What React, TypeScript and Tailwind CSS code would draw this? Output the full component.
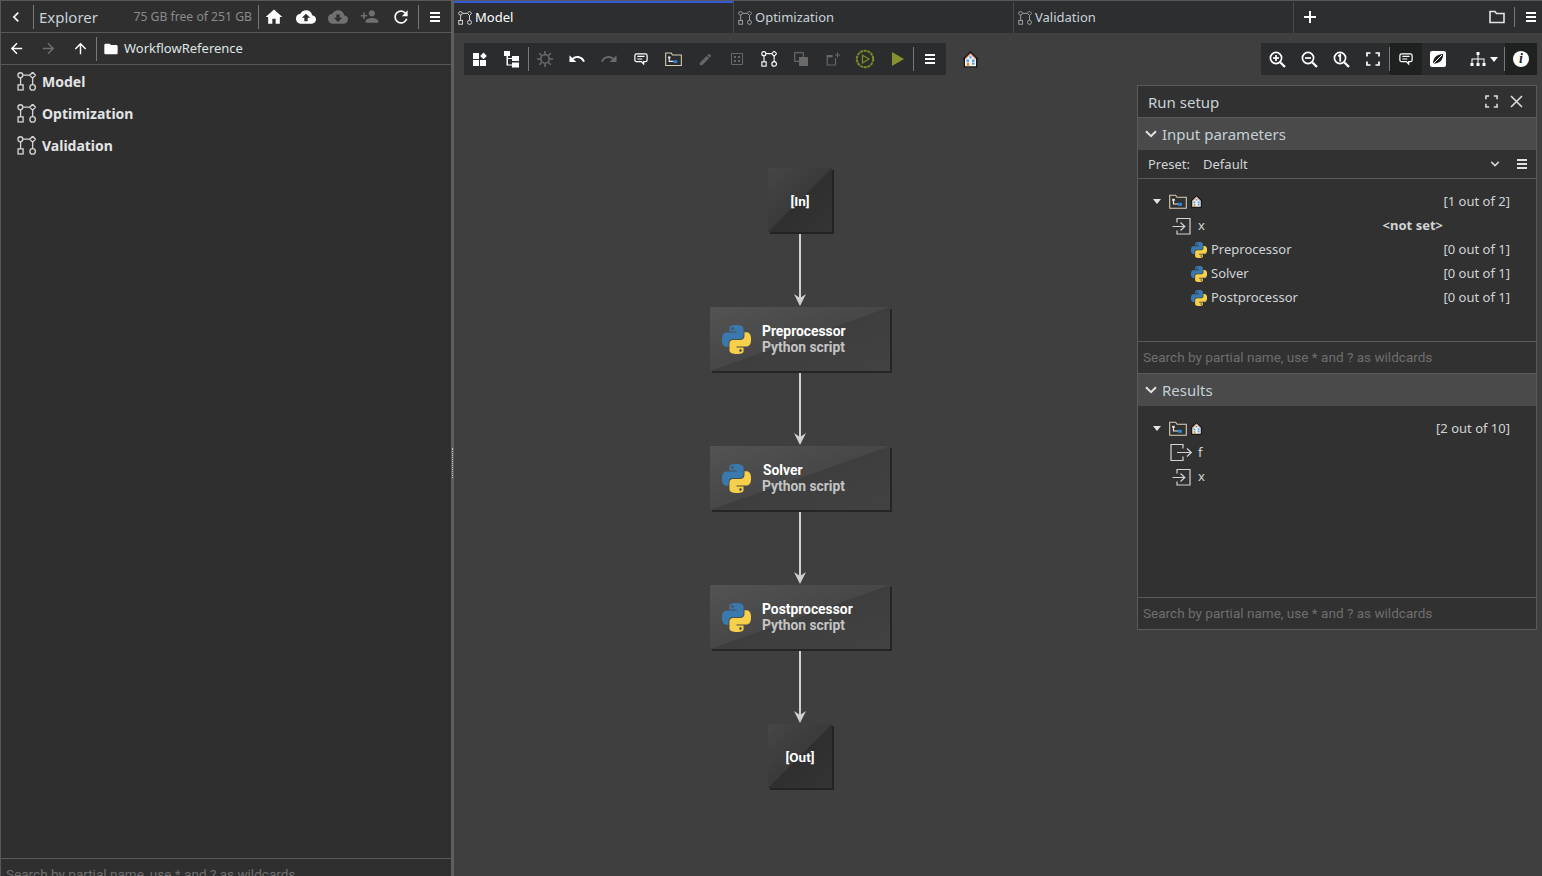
import React from "react";
import { MdArrowBack, MdArrowForward, MdArrowUpward, MdChevronLeft, MdCloudDownload, MdCloudUpload, MdEdit, MdFolder, MdHome, MdPersonAdd, MdRedo, MdRefresh, MdUndo } from "react-icons/md";

const ui = "font-['Noto_Sans','Open_Sans',sans-serif]";
const rb = "font-['Roboto','Liberation_Sans',sans-serif]";

function Menu({ className = "" }: { className?: string }) {
  return (
    <svg width="14" height="14" viewBox="0 0 14 14" className={className} fill="currentColor">
      <rect x="2" y="2" width="10" height="2" />
      <rect x="2" y="6" width="10" height="2" />
      <rect x="2" y="10" width="10" height="2" />
    </svg>
  );
}

function Chev({ className = "" }: { className?: string }) {
  return (
    <svg width="12" height="8" viewBox="0 0 12 8" fill="none" stroke="currentColor" strokeWidth="2" className={className}>
      <path d="M1 1.2 6 6.2 11 1.2" />
    </svg>
  );
}

function Wf({ size = 18, className = "" }: { size?: number; className?: string }) {
  return (
    <svg width={size} height={size} viewBox="0 0 18 18" fill="none" stroke="currentColor" strokeWidth="1.25" className={className}>
      <circle cx="3.2" cy="3" r="2.3" />
      <path d="M14.8 .2 17.6 3 14.8 5.8 12 3Z" />
      <rect x="1" y="12.2" width="4.8" height="4.8" />
      <circle cx="14.8" cy="14.6" r="2.6" />
      <path d="M5.5 3H12M3.4 5.3V12.2M14.8 5.8V12" />
    </svg>
  );
}

const PY1 = "M14.25.18l.9.2.73.26.59.3.45.32.34.34.25.34.16.33.1.3.04.26.02.2-.01.13V8.5l-.05.63-.13.55-.21.46-.26.38-.3.31-.33.25-.35.19-.35.14-.33.1-.3.07-.26.04-.21.02H8.77l-.69.05-.59.14-.5.22-.41.27-.33.32-.27.35-.2.36-.15.37-.1.35-.07.32-.04.27-.02.21v3.06H3.17l-.21-.03-.28-.07-.32-.12-.35-.18-.36-.26-.36-.36-.35-.46-.32-.59-.28-.73-.21-.88-.14-1.05-.05-1.23.06-1.22.16-1.04.24-.87.32-.71.36-.57.4-.44.42-.33.42-.24.4-.16.36-.1.32-.05.24-.01h.16l.06.01h8.16v-.83H6.18l-.01-2.75-.02-.37.05-.34.11-.31.17-.28.25-.26.31-.23.38-.2.44-.18.51-.15.58-.12.64-.1.71-.06.77-.04.84-.02 1.27.05zm-6.3 1.98l-.23.33-.08.41.08.41.23.34.33.22.41.09.41-.09.33-.22.23-.34.08-.41-.08-.41-.23-.33-.33-.22-.41-.09-.41.09z";
const PY2 = "M21.04 6.11l.28.06.32.12.35.18.36.27.36.35.35.47.32.59.28.73.21.88.14 1.04.05 1.23-.06 1.23-.16 1.04-.24.86-.32.71-.36.57-.4.45-.42.33-.42.24-.4.16-.36.09-.32.05-.24.02-.16-.01h-8.22v.82h5.84l.01 2.76.02.36-.05.34-.11.31-.17.29-.25.25-.31.24-.38.2-.44.17-.51.15-.58.13-.64.09-.71.07-.77.04-.84.01-1.27-.04-1.07-.14-.9-.2-.73-.25-.59-.3-.45-.33-.34-.34-.25-.34-.16-.33-.1-.3-.04-.25-.02-.2.01-.13v-5.34l.05-.64.13-.54.21-.46.26-.38.3-.32.33-.24.35-.2.35-.14.33-.1.3-.06.26-.04.21-.02.13-.01h5.84l.69-.05.59-.14.5-.21.41-.28.33-.32.27-.35.2-.36.15-.36.1-.35.07-.32.04-.28.02-.21V6.07h2.09l.14.01zm-6.47 14.25l-.23.33-.08.41.08.41.23.33.33.23.41.08.41-.08.33-.23.23-.33.08-.41-.08-.41-.23-.33-.33-.23-.41-.08-.41.08z";

function Py({ size = 16, className = "" }: { size?: number; className?: string }) {
  return (
    <svg width={size} height={size} viewBox="0 0 24 24" className={className}>
      <path d={PY1} fill="#3a79ad" />
      <path d={PY2} fill="#f6cf4b" />
    </svg>
  );
}

function House({ size = 16 }: { size?: number }) {
  return (
    <svg width={size} height={size} viewBox="0 0 16 16">
      <path d="M8 0 15.4 7.4 14.4 8.4V15.6H1.6V8.4L.6 7.4Z" fill="#0e1412" />
      <path d="M8 1.8 13.2 7V14.4H2.8V7Z" fill="#f2f2f2" />
      <path d="M8 1.8 13.6 7.4 12.9 8.1 8 3.2 3.1 8.1 2.4 7.4Z" fill="#c9785a" />
      <rect x="4.2" y="8" width="2.4" height="2.2" fill="#4c9ad8" />
      <rect x="9.4" y="8" width="2.4" height="2.2" fill="#4c9ad8" />
      <rect x="7" y="5" width="2" height="2" fill="#4c9ad8" />
      <rect x="4.6" y="11" width="2" height="3.4" fill="#dd8a2a" />
      <rect x="9.4" y="11" width="2.4" height="1.8" fill="#4c9ad8" />
    </svg>
  );
}

function FolderWf({ size = 18 }: { size?: number }) {
  return (
    <svg width={size} height={size} viewBox="0 0 18 18" fill="none">
      <path d="M.7 15.3V2.2H6.6L8 4.2H17.3V15.3Z" stroke="#d9cdb4" strokeWidth="1.1" />
      <path d="M4.5 6.5V11H9" stroke="#e8e8e8" strokeWidth="1.2" />
      <rect x="3.2" y="5.8" width="2.6" height="2" fill="#e8e8e8" />
      <rect x="9" y="9.8" width="4" height="3" fill="#2f83cf" />
    </svg>
  );
}

function InputIco() {
  return (
    <svg width="20" height="20" viewBox="0 0 20 20" fill="none" stroke="#d4d4d4" strokeWidth="1.2">
      <path d="M5 6.5V2.5H18V18H5V14.5" />
      <path d="M.5 10.5H12.5M8.5 6.5 12.8 10.5 8.5 14.5" />
    </svg>
  );
}
function OutputIco() {
  return (
    <svg width="24" height="20" viewBox="0 0 24 20" fill="none" stroke="#d4d4d4" strokeWidth="1.2">
      <path d="M13 5.5V1.5H1V17.5H13V13.5" />
      <path d="M7 9.5H21M17 5.5 21.3 9.5 17 13.5" />
    </svg>
  );
}

function Comment({ color = "#fff" }: { color?: string }) {
  return (
    <svg width="14" height="14" viewBox="0 0 16 16" fill="none" stroke={color} strokeWidth="1.4">
      <path d="M3 2.2H13Q15 2.2 15 4.2V9Q15 11 13 11H11V13.6L8.4 11H3Q1 11 1 9V4.2Q1 2.2 3 2.2Z" />
      <path d="M3.8 5H12M3.8 8H9.5" />
    </svg>
  );
}

function Grid() {
  return (
    <svg width="16" height="16" viewBox="0 0 16 16" fill="#fff">
      <rect x="1" y="2" width="6" height="6" />
      <rect x="1" y="9" width="6" height="6" />
      <rect x="8" y="9" width="6" height="6" />
      <path d="M11.5 1.5 14.8 5 11.5 8.3 8.2 5Z" />
    </svg>
  );
}
function Tree() {
  return (
    <svg width="18" height="18" viewBox="0 0 18 18" fill="#fff">
      <rect x="1" y="1" width="6" height="5" />
      <rect x="9" y="6" width="7" height="5" />
      <rect x="9" y="12.5" width="7" height="5" />
      <path d="M3.5 6H5V8H9V9H5V14.5H9V15.5H3.5Z" />
    </svg>
  );
}
function Sun() {
  return (
    <svg width="16" height="16" viewBox="0 0 16 16" fill="none" stroke="#6a6a6a" strokeWidth="1.6">
      <circle cx="8" cy="8" r="4.2" />
      <path d="M8 0V3M8 13V16M0 8H3M13 8H16M2.3 2.3 4.4 4.4M11.6 11.6 13.7 13.7M2.3 13.7 4.4 11.6M11.6 4.4 13.7 2.3" />
    </svg>
  );
}
function Dots() {
  return (
    <svg width="14" height="14" viewBox="0 0 14 14" fill="#686868">
      <path d="M1.5 1.5H12.5V12.5H1.5Z" fill="none" stroke="#686868" />
      <rect x="4" y="4" width="2" height="2" />
      <rect x="8" y="4" width="2" height="2" />
      <rect x="4" y="8" width="2" height="2" />
      <rect x="8" y="8" width="2" height="2" />
    </svg>
  );
}
function Overlap() {
  return (
    <svg width="14" height="14" viewBox="0 0 14 14">
      <rect x=".7" y=".7" width="8.6" height="8.6" fill="none" stroke="#6a6a6a" strokeWidth="1.2" />
      <rect x="5" y="5" width="9" height="9" fill="#6a6a6a" />
    </svg>
  );
}
function AddFrame() {
  return (
    <svg width="14" height="14" viewBox="0 0 14 14" fill="none" stroke="#666" strokeWidth="1.2">
      <path d="M1.2 4.5V13H9.5V6" />
      <rect x=".6" y="3" width="6" height="2.4" fill="#666" stroke="none" />
      <path d="M11.5 .5V5.5M9 3H14" />
    </svg>
  );
}
function PlayBadge() {
  return (
    <svg width="20" height="20" viewBox="0 0 20 20" fill="none">
      <circle cx="10" cy="10" r="8.2" stroke="#7b8a26" strokeWidth="2" strokeDasharray="3 .7" />
      <path d="M7.5 6.2 14 10 7.5 13.8Z" stroke="#7b8a26" strokeWidth="1.3" />
    </svg>
  );
}
function Play() {
  return (
    <svg width="14" height="16" viewBox="0 0 14 16" className="ml-[2px]"><path d="M1 1 13 8 1 15Z" fill="#86922f" /></svg>
  );
}
function Zoom({ mode }: { mode: "in" | "out" | "one" }) {
  return (
    <svg width="17" height="17" viewBox="0 0 17 17" fill="none" stroke="#fff" strokeWidth="1.7">
      <circle cx="7" cy="7" r="5.6" />
      <path d="M11.2 11.2 16 16" strokeWidth="2.2" />
      {mode !== "one" && <path d="M4 7H10" />}
      {mode === "in" && <path d="M7 4V10" />}
      {mode === "one" && <path d="M5.2 5.2 7.2 3.8V10.4" strokeWidth="1.8" />}
    </svg>
  );
}
function Fit({ size = 14, className = "" }: { size?: number; className?: string }) {
  return (
    <svg width={size} height={size} viewBox="0 0 14 14" fill="none" stroke="currentColor" strokeWidth="1.7" className={className}>
      <path d="M1 4.5V1H4.5M9.5 1H13V4.5M13 9.5V13H9.5M4.5 13H1V9.5" />
    </svg>
  );
}
function Note() {
  return (
    <svg width="16" height="16" viewBox="0 0 16 16">
      <rect x="0" y="0" width="16" height="16" rx="2" fill="#fff" />
      <path d="M3 12.8C3 6.5 7 3.2 13.2 3 13.2 9 9.5 12.8 3 12.8Z" fill="#1c1c1c" />
      <path d="M2 14 12 4" stroke="#fff" strokeWidth="1" />
    </svg>
  );
}
function Hier() {
  return (
    <svg width="16" height="16" viewBox="0 0 16 16" fill="#fff">
      <rect x="6.5" y="1" width="3" height="3" />
      <rect x="0.5" y="12" width="3" height="3" />
      <rect x="6.5" y="12" width="3" height="3" />
      <rect x="12.5" y="12" width="3" height="3" />
      <path d="M7.5 4H8.5V7.5H14.5V12H13.5V8.5H8.5V12H7.5V8.5H2.5V12H1.5V7.5H7.5Z" />
    </svg>
  );
}

function Cell({ children, className = "" }: { children: React.ReactNode; className?: string }) {
  return <div className={`flex h-8 w-8 shrink-0 items-center justify-center ${className}`}>{children}</div>;
}
function VDiv({ h = "h-6" }: { h?: string }) {
  return <div className={`w-px shrink-0 bg-[#77797a] ${h}`} />;
}

function Tab({ label, active }: { label: string; active?: boolean }) {
  return (
    <div className={`flex h-full w-[280px] shrink-0 items-center gap-[3px] border-t-2 border-r border-r-[#4a4a4a] pl-[4px] text-[13px] ${ui} ${active ? "border-t-[#3358d8] text-white" : "border-t-transparent text-[#c8d2d8]"}`}>
      <Wf size={14} className={active ? "text-[#d8d8d8]" : "text-[#a0a0a0]"} />
      <span>{label}</span>
    </div>
  );
}

function Node({ top, name, solver }: { top: number; name: string; solver?: boolean }) {
  return (
    <div
      className={`absolute left-[256px] flex h-[64px] w-[180px] items-center bg-[linear-gradient(to_bottom_right,#535353_0%,#474747_49.9%,#3e3e3e_50.1%,#424242_100%)] pl-[12px] shadow-[2px_2px_0_#252525] ${rb}`}
      style={{ top }}
    >
      <Py size={29} />
      <div className="ml-[11px] flex flex-col text-[13.85px] leading-[16px] font-bold">
        <span className={`text-white ${solver ? "ml-px" : ""}`}>{name}</span>
        <span className="text-[#c4c4c4]">Python script</span>
      </div>
    </div>
  );
}

function Port({ top, label }: { top: number; label: string }) {
  return (
    <div
      className={`absolute left-[314px] flex h-[64px] w-[64px] items-center justify-center bg-[linear-gradient(to_bottom_right,#464646_0%,#3a3a3a_49.9%,#2f2f2f_50.1%,#343434_100%)] pt-[2px] text-[13.5px] font-bold text-white shadow-[2px_2px_0_#232323] ${rb}`}
      style={{ top }}
    >
      {label}
    </div>
  );
}

function TreeRow({ children }: { children: React.ReactNode }) {
  return <div className="flex h-6 items-center pt-px text-[13px] text-[#d0d4d6]">{children}</div>;
}

function Tri() {
  return <span className="mr-[8px] h-0 w-0 border-x-[4.5px] border-t-[5px] border-x-transparent border-t-[#e4e4e4]" />;
}

function SectionHead({ label }: { label: string }) {
  return (
    <div className="flex h-8 shrink-0 items-center bg-[#4a4a4a] pl-[7px] text-[15px] text-[#c4d0d6]">
      <Chev className="text-[#e0e0e0]" />
      <span className="ml-[5px]">{label}</span>
    </div>
  );
}

function Search({ className = "" }: { className?: string }) {
  return (
    <div className={`flex h-8 shrink-0 items-center border-t border-[#5a5a5a] pl-[5px] text-[13.55px] text-[#6e6e6e] ${rb} ${className}`}>
      Search by partial name, use * and ? as wildcards
    </div>
  );
}

export default function App() {
  return (
    <div className={`flex h-[876px] w-[1542px] overflow-hidden bg-[#3f3f3f] ${ui}`}>
      {/* Explorer */}
      <div className="flex h-[890px] w-[451px] shrink-0 flex-col border-t border-l border-[#585858] bg-[#2f2f2f]">
        <div className="flex h-[32px] shrink-0 items-center border-b border-[#585858]">
          <Cell className="-ml-px"><MdChevronLeft size={20} className="text-white" /></Cell>
          <div className="ml-px"><VDiv /></div>
          <span className="ml-[5px] pt-[2px] text-[15px] text-[#c8d2d8]">Explorer</span>
          <span className="ml-auto mr-[6px] pt-[2px] text-[12.2px] text-[#8a8a8a]">75 GB free of 251 GB</span>
          <VDiv />
          <Cell className="-ml-px"><MdHome size={20} className="text-white" /></Cell>
          <Cell><MdCloudUpload size={20} className="text-white" /></Cell>
          <Cell><MdCloudDownload size={20} className="text-[#707070]" /></Cell>
          <Cell className="-ml-px"><MdPersonAdd size={19} className="text-[#707070]" /></Cell>
          <Cell><MdRefresh size={20} className="text-white" /></Cell>
          <div className="ml-px"><VDiv /></div>
          <Cell className="text-white"><Menu /></Cell>
        </div>
        <div className="flex h-[32px] shrink-0 items-center border-b border-[#585858]">
          <Cell className="-ml-px"><MdArrowBack size={17} className="text-white" /></Cell>
          <Cell><MdArrowForward size={17} className="text-[#6e6e6e]" /></Cell>
          <Cell><MdArrowUpward size={17} className="text-white" /></Cell>
          <VDiv />
          <MdFolder size={16} className="ml-[6px] text-white" />
          <span className="ml-[5px] text-[13px] text-[#dfe4e6]">WorkflowReference</span>
        </div>
        <div className="flex flex-1 flex-col">
          {["Model", "Optimization", "Validation"].map((n) => (
            <div key={n} className="flex h-8 items-center pl-[16px] text-[14px] font-bold text-[#e2e4e6]">
              <Wf size={19} className="text-[#d4d4d4]" />
              <span className="ml-[6px]">{n}</span>
            </div>
          ))}
        </div>
        <Search />
      </div>

      {/* Splitter */}
      <div className="flex h-full w-[3px] shrink-0 items-center justify-center bg-[#5e5e5e] pt-[50px]">
        <div className="h-[30px] w-px border-l border-dotted border-[#c0c0c0]" />
      </div>

      {/* Main */}
      <div className="relative min-w-0 flex-1">
        <div className="flex h-[33px] items-stretch border-t border-[#585858] bg-[#2d2e30]">
          <Tab label="Model" active />
          <Tab label="Optimization" />
          <Tab label="Validation" />
          <div className="flex w-[32px] items-center justify-center">
            <svg width="12" height="12" viewBox="0 0 12 12" fill="none" stroke="#fff" strokeWidth="2"><path d="M6 0V12M0 6H12" /></svg>
          </div>
          <div className="ml-auto flex items-center">
            <svg width="16" height="14" viewBox="0 0 16 14" fill="none" stroke="#e4e4e4" strokeWidth="1.6" className="mr-[9px]">
              <path d="M1 12.5V1.5H6L7.5 3.5H15V12.5Z" />
            </svg>
            <VDiv h="h-5" />
            <div className="flex h-8 w-[27px] items-center justify-center pl-[5px] text-white"><Menu /></div>
          </div>
        </div>

        {/* Canvas */}
        <svg className="absolute left-0 top-0" width="1088" height="876" fill="none">
          {[[232, 306], [371, 445], [510, 584], [649, 723]].map(([a, b]) => (
            <g key={a}>
              <path d={`M346 ${a}V${b - 6}`} stroke="#d0d0d0" strokeWidth="2" />
              <path d={`M346 ${b} L340 ${b - 12} L346 ${b - 8} L352 ${b - 12}Z`} fill="#d0d0d0" />
            </g>
          ))}
        </svg>
        <Port top={168} label="[In]" />
        <Node top={307} name="Preprocessor" />
        <Node top={446} name="Solver" solver />
        <Node top={585} name="Postprocessor" />
        <Port top={724} label="[Out]" />

        {/* Left toolbar */}
        <div className="absolute left-[10px] top-[43px] flex h-8 items-center bg-[#2b2c2e]">
          <Cell><Grid /></Cell>
          <Cell><Tree /></Cell>
          <VDiv />
          <Cell><Sun /></Cell>
          <Cell><MdUndo size={18} className="text-white" /></Cell>
          <Cell><MdRedo size={18} className="text-[#6a6a6a]" /></Cell>
          <Cell><Comment /></Cell>
          <Cell><FolderWf size={17} /></Cell>
          <Cell><MdEdit size={15} className="text-[#666]" /></Cell>
          <Cell><Dots /></Cell>
          <Cell className="text-white"><Wf size={16} /></Cell>
          <Cell><Overlap /></Cell>
          <Cell><AddFrame /></Cell>
          <Cell><PlayBadge /></Cell>
          <Cell><Play /></Cell>
          <VDiv />
          <Cell className="text-white"><Menu /></Cell>
        </div>
        <div className="absolute left-[500px] top-[43px] flex h-8 w-8 items-center justify-center"><House size={17} /></div>

        {/* Right toolbar */}
        <div className="absolute left-[807px] top-[43px] flex h-8 items-center bg-[#2b2c2e]">
          <Cell><Zoom mode="in" /></Cell>
          <Cell><Zoom mode="out" /></Cell>
          <Cell><Zoom mode="one" /></Cell>
          <Cell className="text-white"><Fit /></Cell>
          <VDiv />
          <Cell className="bg-[#1f2121]"><Comment /></Cell>
          <Cell><Note /></Cell>
          <div className="flex h-8 w-[50px] items-center pl-[16px]">
            <Hier />
            <span className="ml-[4px] h-0 w-0 border-x-[4px] border-t-[5px] border-x-transparent border-t-white" />
          </div>
          <VDiv />
          <Cell className="bg-[#1f2121]">
            <span className="flex h-4 w-4 items-center justify-center rounded-full bg-white font-['Liberation_Serif',serif] text-[14px] leading-none font-bold text-[#1f2121] italic">i</span>
          </Cell>
        </div>

        {/* Run setup */}
        <div className="absolute left-[683px] top-[85px] flex h-[545px] w-[400px] flex-col border border-[#5a5a5a] bg-[#313131]">
          <div className="flex h-8 shrink-0 items-center border-b border-[#5a5a5a] pl-[10px] pr-[13px] text-[15px] text-[#c8d2d8]">
            <span className="pt-px">Run setup</span>
            <Fit size={13} className="ml-auto text-[#dcdcdc]" />
            <svg width="13" height="13" viewBox="0 0 13 13" fill="none" stroke="#dcdcdc" strokeWidth="1.6" className="ml-[12px]"><path d="M1 1 12 12M12 1 1 12" /></svg>
          </div>
          <SectionHead label="Input parameters" />
          <div className="flex h-[29px] shrink-0 items-center border-b border-[#5a5a5a] pl-[10px] text-[13px] text-[#d0d4d6]">
            <span className="pt-px">Preset:</span>
            <span className="ml-[13px] pt-px">Default</span>
            <Chev className="ml-auto scale-75 text-[#d4d4d4]" />
            <Menu className="ml-[14px] mr-[7px] text-[#e0e0e0]" />
          </div>
          <div className="h-[162px] shrink-0 pl-[15px] pr-[26px] pt-[10px]">
            <TreeRow>
              <Tri />
              <FolderWf />
              <span className="ml-[3px] flex"><House size={13} /></span>
              <span className="ml-auto">[1 out of 2]</span>
            </TreeRow>
            <TreeRow>
              <span className="ml-[19px] flex w-[26px]"><InputIco /></span>
              <span>x</span>
              <span className="ml-auto mr-[67px] font-bold">&lt;not set&gt;</span>
            </TreeRow>
            {["Preprocessor", "Solver", "Postprocessor"].map((n) => (
              <TreeRow key={n}>
                <Py size={16} className="ml-[38px]" />
                <span className="ml-[4px]">{n}</span>
                <span className="ml-auto">[0 out of 1]</span>
              </TreeRow>
            ))}
          </div>
          <Search />
          <div className="shrink-0 border-t border-[#5a5a5a]" />
          <SectionHead label="Results" />
          <div className="h-[191px] shrink-0 pl-[15px] pr-[26px] pt-[10px]">
            <TreeRow>
              <Tri />
              <FolderWf />
              <span className="ml-[3px] flex"><House size={13} /></span>
              <span className="ml-auto">[2 out of 10]</span>
            </TreeRow>
            <TreeRow>
              <span className="ml-[17px] flex w-[28px]"><OutputIco /></span>
              <span>f</span>
            </TreeRow>
            <TreeRow>
              <span className="ml-[19px] flex w-[26px]"><InputIco /></span>
              <span>x</span>
            </TreeRow>
          </div>
          <Search />
        </div>
      </div>
    </div>
  );
}
